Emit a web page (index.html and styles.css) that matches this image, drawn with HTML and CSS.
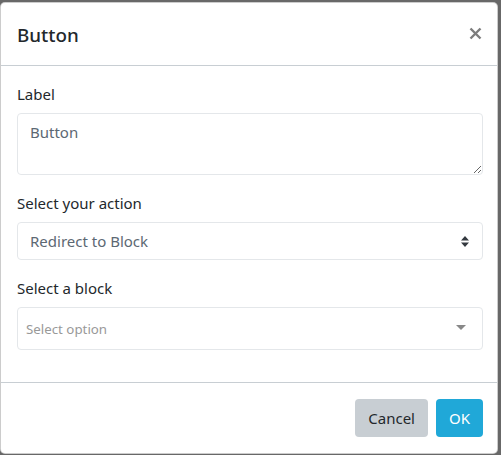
FILE: index.html
```html
<!DOCTYPE html>
<html lang="en">
<head>
<meta charset="utf-8">
<title>Button</title>
<link rel="stylesheet" href="styles.css">
</head>
<body>
<div class="modal">
  <div class="modal-header">
    <h5 class="modal-title">Button</h5>
    <button class="close" type="button" aria-label="Close">
      <svg width="13" height="13" viewBox="0 0 13 13"><path d="M1.5 1.5 L11.5 11.5 M11.5 1.5 L1.5 11.5" stroke="#7d7d7d" stroke-width="2.4" stroke-linecap="butt"/></svg>
    </button>
  </div>
  <div class="modal-body">
    <div class="form-group">
      <label class="form-label">Label</label>
      <textarea class="form-control textarea" rows="2">Button</textarea>
    </div>
    <div class="form-group">
      <label class="form-label">Select your action</label>
      <div class="form-control select">
        <span>Redirect to Block</span>
        <svg class="sort" width="8" height="11" viewBox="0 0 8 11"><path d="M4 0 L8 4.5 L0 4.5 Z M0 6.5 L8 6.5 L4 11 Z" fill="#343a40"/></svg>
      </div>
    </div>
    <div class="form-group">
      <label class="form-label">Select a block</label>
      <div class="select2">
        <span class="placeholder">Select option</span>
        <svg class="caret" width="10" height="5" viewBox="0 0 10 5"><path d="M0 0 L10 0 L5 5 Z" fill="#888"/></svg>
      </div>
    </div>
  </div>
  <div class="modal-footer">
    <button class="btn btn-secondary" type="button">Cancel</button>
    <button class="btn btn-info" type="button">OK</button>
  </div>
</div>
</body>
</html>
```
FILE: styles.css
```css
* { box-sizing: border-box; }
html, body { margin: 0; padding: 0; }
body {
  background: #686868;
  font-family: "Noto Sans", "Open Sans", sans-serif;
  font-size: 15px;
  line-height: 24px;
  color: #23282c;
  height: 455px;
  overflow: hidden;
}
.modal {
  width: 498px;
  margin-top: 2px;
  background: #fff;
  border: 1px solid rgba(0,0,0,.2);
  border-radius: 5px;
  overflow: hidden;
}
.modal-header {
  display: flex;
  justify-content: space-between;
  align-items: flex-start;
  padding: 16px 14px 16px 16px;
  border-bottom: 1px solid #c8ced3;
}
.modal-title {
  margin: 0;
  padding-top: 2px;
  font-size: 18.8px;
  line-height: 28px;
  font-weight: 500;
  color: #23282c;
}
.close {
  background: none;
  border: 0;
  padding: 0;
  margin: 8px 1px 0 0;
  width: 13px;
  height: 13px;
  display: block;
  cursor: pointer;
}
.close svg { display: block; }
.modal-body { padding: 16px 14px 16px 16px; }
.form-group { margin-bottom: 16px; }
.form-label {
  display: block;
  padding-top: 2px;
  line-height: 21px;
  margin-bottom: 8px;
}
.form-control {
  display: block;
  width: 100%;
  padding: 6px 12px;
  font: inherit;
  font-size: 15px;
  line-height: 24px;
  color: #5c6873;
  background: #fff;
  border: 1px solid #e4e7ea;
  border-radius: 4px;
}
.textarea {
  height: 62px;
  resize: vertical;
  outline: none;
}
.select {
  height: 38px;
  display: flex;
  align-items: center;
  justify-content: space-between;
  padding-right: 13px;
}
.sort { display: block; }
.select2 {
  height: 43px;
  border: 1px solid #e4e7ea;
  border-radius: 4px;
  display: flex;
  align-items: center;
  justify-content: space-between;
  padding: 0 16px 0 8px;
}
.placeholder {
  color: #999;
  font-size: 13.3px;
}
.caret { display: block; margin-top: -3px; }
.modal-footer {
  display: flex;
  justify-content: flex-end;
  padding: 12px 10px 12px 12px;
  border-top: 1px solid #c8ced3;
}
.btn {
  margin: 4px;
  font: inherit;
  font-size: 15px;
  line-height: 24px;
  padding: 6px 12px;
  border: 1px solid transparent;
  border-radius: 4px;
}
.btn-secondary { background: #c8ced3; color: #23282c; }
.btn-info { background: #20a8d8; color: #fff; }
```
